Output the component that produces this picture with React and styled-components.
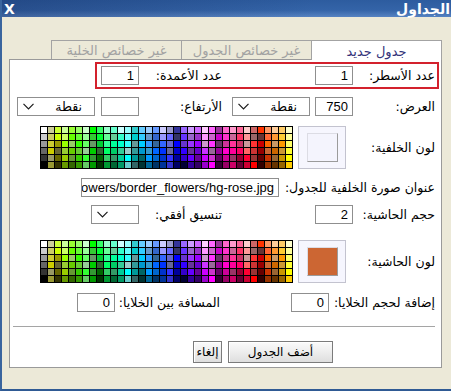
import React from 'react';
import styled, { createGlobalStyle } from 'styled-components';

const Global = createGlobalStyle`
  html, body { margin: 0; padding: 0; }
  body {
    width: 451px; height: 391px; overflow: hidden;
    background: #ece9d8;
    font-family: "Liberation Sans", "DejaVu Sans", sans-serif;
  }
  * { box-sizing: border-box; }
`;

const Window = styled.div`
  width: 451px;
  height: 391px;
  display: flex;
  flex-direction: column;
  background: #ece9d8;
  border-left: 2px solid #3a659e;
  border-bottom: 2px solid #2f5a94;
`;

const TitleBar = styled.div`
  height: 17px;
  flex: 0 0 17px;
  display: flex;
  align-items: center;
  justify-content: space-between;
  padding: 0 1px 0 2px;
  background:
    linear-gradient(90deg, rgba(10, 25, 70, 0.28), rgba(10, 25, 70, 0) 70%),
    linear-gradient(180deg, #2d5c9f 0%, #3464a8 60%, #5683c2 100%);
  color: #fff;
  font-weight: bold;
`;

const CloseX = styled.span`
  font-family: "DejaVu Sans", sans-serif;
  font-size: 14px;
  font-weight: bold;
`;

const Title = styled.span`
  font-family: "DejaVu Sans", sans-serif;
  font-size: 14px;
  font-weight: bold;
`;

const Body = styled.div`
  flex: 1;
  padding: 23px 9px 0 7px;
`;

const Tabs = styled.div`
  display: flex;
  height: 19px;
  align-items: flex-start;
`;

const Tab = styled.div`
  width: 131px;
  height: ${p => (p.$active ? 20 : 19)}px;
  margin-bottom: ${p => (p.$active ? -1 : 0)}px;
  margin-right: ${p => (p.$first ? 0 : -1)}px;
  position: relative;
  z-index: ${p => (p.$active ? 2 : 1)};
  border: 1px solid #a3a3a3;
  border-bottom: none;
  background: ${p => (p.$active ? '#ffffff' : '#ece9d8')};
  color: ${p => (p.$active ? '#33337a' : '#a2a2a2')};
  font-family: "DejaVu Sans", sans-serif;
  font-size: 13px;
  display: flex;
  align-items: center;
  justify-content: center;
  padding-top: 1px;
`;

const Panel = styled.div`
  height: 309px;
  background: #fff;
  border: 1px solid #9a9a9a;
  display: flex;
  flex-direction: column;
`;

const Row = styled.div`
  display: flex;
  align-items: center;
  height: ${p => p.$h}px;
  margin-top: ${p => p.$top}px;
  padding-right: 4px;
`;

const HighlightRow = styled.div`
  display: flex;
  align-items: center;
  height: 27px;
  width: 344px;
  margin-top: 2px;
  margin-right: 2px;
  border: 2px solid #d3212d;
`;

const Label = styled.div`
  flex: 0 0 ${p => p.$w}px;
  padding-right: 2px;
  font-family: "DejaVu Sans", sans-serif;
  font-size: 12.5px;
  color: #000;
  white-space: nowrap;
  text-align: right;
`;

const Field = styled.div`
  flex: 0 0 ${p => (p.$w ? `${p.$w}px` : 'auto')};
  display: flex;
  align-items: center;
  gap: ${p => p.$gap || 0}px;
  padding-right: ${p => (p.$pad === undefined ? 2 : p.$pad)}px;
`;

const TextBox = styled.div`
  width: ${p => p.$w}px;
  height: 19px;
  border: 1px solid #8f8f8f;
  background: #fff;
  font-family: "Liberation Sans", sans-serif;
  font-size: 13px;
  color: #000;
  display: flex;
  align-items: center;
  justify-content: flex-end;
  padding: 0 4px;
  overflow: hidden;
  white-space: nowrap;
  direction: ltr;
`;

const SelectBox = styled.div`
  width: ${p => p.$w}px;
  height: 19px;
  border: 1px solid #8f8f8f;
  background: #fff;
  display: flex;
  align-items: center;
  justify-content: space-between;
  direction: ltr;
  padding: 0 12px 0 5px;
`;

const SelectText = styled.span`
  font-family: "DejaVu Sans", sans-serif;
  font-size: 12.5px;
  color: #000;
`;

const Chevron = () => (
  <svg width="11" height="7" viewBox="0 0 11 7">
    <polyline points="0.5,0.8 5.5,5.8 10.5,0.8" fill="none" stroke="#1a1a1a" strokeWidth="1.2" />
  </svg>
);

const Select = ({ w, text }) => (
  <SelectBox $w={w}>
    <Chevron />
    {text ? <SelectText>{text}</SelectText> : null}
  </SelectBox>
);

const Preview = styled.div`
  flex: 0 0 48px;
  height: 43px;
  border: 1px solid #c3c3cf;
  background: #f6f6fe;
  display: flex;
  align-items: center;
  justify-content: center;
  margin-left: 5px;
`;

const Swatch = styled.div`
  width: 31px;
  height: 29px;
  background: ${p => p.$color};
  border-top: 1px solid #dcdce4;
  border-left: 1px solid #dcdce4;
  border-right: 1px solid #9b9b9b;
  border-bottom: 1px solid #9b9b9b;
`;

const PaletteGrid = styled.div`
  direction: ltr;
  display: grid;
  grid-template-columns: repeat(36, 6px);
  grid-auto-rows: 6px;
  gap: 1px;
  padding: 1px;
  background: #000;
`;

const Cell = styled.div`
  background: ${p => p.$c};
`;

const Separator = styled.div`
  height: 1px;
  margin: 13px 6px 0 3px;
  background: #a5a5a5;
`;

const ButtonRow = styled.div`
  display: flex;
  gap: 6px;
  height: 22px;
  margin-top: 14px;
  padding-right: 108px;
`;

const Button = styled.div`
  width: ${p => p.$w}px;
  height: 22px;
  border: 1px solid #7b7b7b;
  background: linear-gradient(180deg, #fbfbfb 0%, #ececec 55%, #dedede 100%);
  box-shadow: inset 1px 1px 0 #ffffff;
  display: flex;
  align-items: center;
  justify-content: center;
  font-family: "DejaVu Sans", sans-serif;
  font-size: 12px;
  color: #000;
`;

const hex = (r, g, b) =>
  '#' + [r, g, b].map(v => v.toString(16).padStart(2, '0')).join('');

function buildPalette() {
  const L = [0x00, 0x33, 0x66, 0x99, 0xcc, 0xff];
  const list = [];
  for (const r of L) for (const g of L) for (const b of L) {
    if (r === g && g === b) continue;
    const max = Math.max(r, g, b);
    const min = Math.min(r, g, b);
    const d = max - min;
    let h;
    if (max === r) h = 60 * (((g - b) / d) % 6);
    else if (max === g) h = 60 * ((b - r) / d + 2);
    else h = 60 * ((r - g) / d + 4);
    if (h < 0) h += 360;
    let key = (h - 60 + 360) % 360;
    if (h === 60 && max === 255) key = 359.9;
    const lum = 0.299 * r + 0.587 * g + 0.114 * b;
    list.push({ r, g, b, key, lum });
  }
  list.sort((a, b) => a.key - b.key || b.lum - a.lum);
  const cols = [[0xff, 0xcc, 0x99, 0x66, 0x33, 0x00].map(v => hex(v, v, v))];
  for (let i = 0; i < 35; i++) {
    const chunk = list.slice(i * 6, i * 6 + 6).sort((a, b) => b.lum - a.lum);
    cols.push(chunk.map(c => hex(c.r, c.g, c.b)));
  }
  const cells = [];
  for (let row = 0; row < 6; row++) for (let col = 0; col < 36; col++) cells.push(cols[col][row]);
  return cells;
}

const PALETTE = buildPalette();

const Palette = () => (
  <PaletteGrid>
    {PALETTE.map((c, i) => <Cell key={i} $c={c} />)}
  </PaletteGrid>
);

export default function App() {
  return (
    <>
      <Global />
      <Window>
        <TitleBar>
          <CloseX>X</CloseX>
          <Title>الجداول</Title>
        </TitleBar>
        <Body dir="rtl">
          <Tabs>
            <Tab $active $first>جدول جديد</Tab>
            <Tab>غير خصائص الجدول</Tab>
            <Tab>غير خصائص الخلية</Tab>
          </Tabs>
          <Panel>
            <HighlightRow>
              <Label $w={82}>عدد الأسطر:</Label>
              <Field $w={131}><TextBox $w={38}>1</TextBox></Field>
              <Label $w={83}>عدد الأعمدة:</Label>
              <Field><TextBox $w={38}>1</TextBox></Field>
            </HighlightRow>

            <Row $h={20} $top={7}>
              <Label $w={82}>العرض:</Label>
              <Field $w={131} $gap={5}>
                <TextBox $w={38}>750</TextBox>
                <Select w={78} text="نقطة" />
              </Field>
              <Label $w={83}>الأرتفاع:</Label>
              <Field $gap={6}>
                <TextBox $w={38}></TextBox>
                <Select w={78} text="نقطة" />
              </Field>
            </Row>

            <Row $h={43} $top={10}>
              <Label $w={91}>لون الخلفية:</Label>
              <Preview><Swatch $color="#f4f4fd" /></Preview>
              <Palette />
            </Row>

            <Row $h={20} $top={8}>
              <Label $w={158}>عنوان صورة الخلفية للجدول:</Label>
              <Field $pad={0}>
                <TextBox $w={198}><span>images/flowers/border_flowers/hg-rose.jpg</span></TextBox>
              </Field>
            </Row>

            <Row $h={20} $top={7}>
              <Label $w={82}>حجم الحاشية:</Label>
              <Field $w={131}><TextBox $w={38}>2</TextBox></Field>
              <Label $w={83}>تنسيق أفقي:</Label>
              <Field><Select w={48} /></Field>
            </Row>

            <Row $h={43} $top={16}>
              <Label $w={91}>لون الحاشية:</Label>
              <Preview><Swatch $color="#cc6633" /></Preview>
              <Palette />
            </Row>

            <Row $h={21} $top={9}>
              <Label $w={108}>إضافة لحجم الخلايا:</Label>
              <Field $w={107} $pad={0}><TextBox $w={38}>0</TextBox></Field>
              <Label $w={105}>المسافة بين الخلايا:</Label>
              <Field><TextBox $w={38}>0</TextBox></Field>
            </Row>

            <Separator />

            <ButtonRow>
              <Button $w={105}>أضف الجدول</Button>
              <Button $w={29}>إلغاء</Button>
            </ButtonRow>
          </Panel>
        </Body>
      </Window>
    </>
  );
}
